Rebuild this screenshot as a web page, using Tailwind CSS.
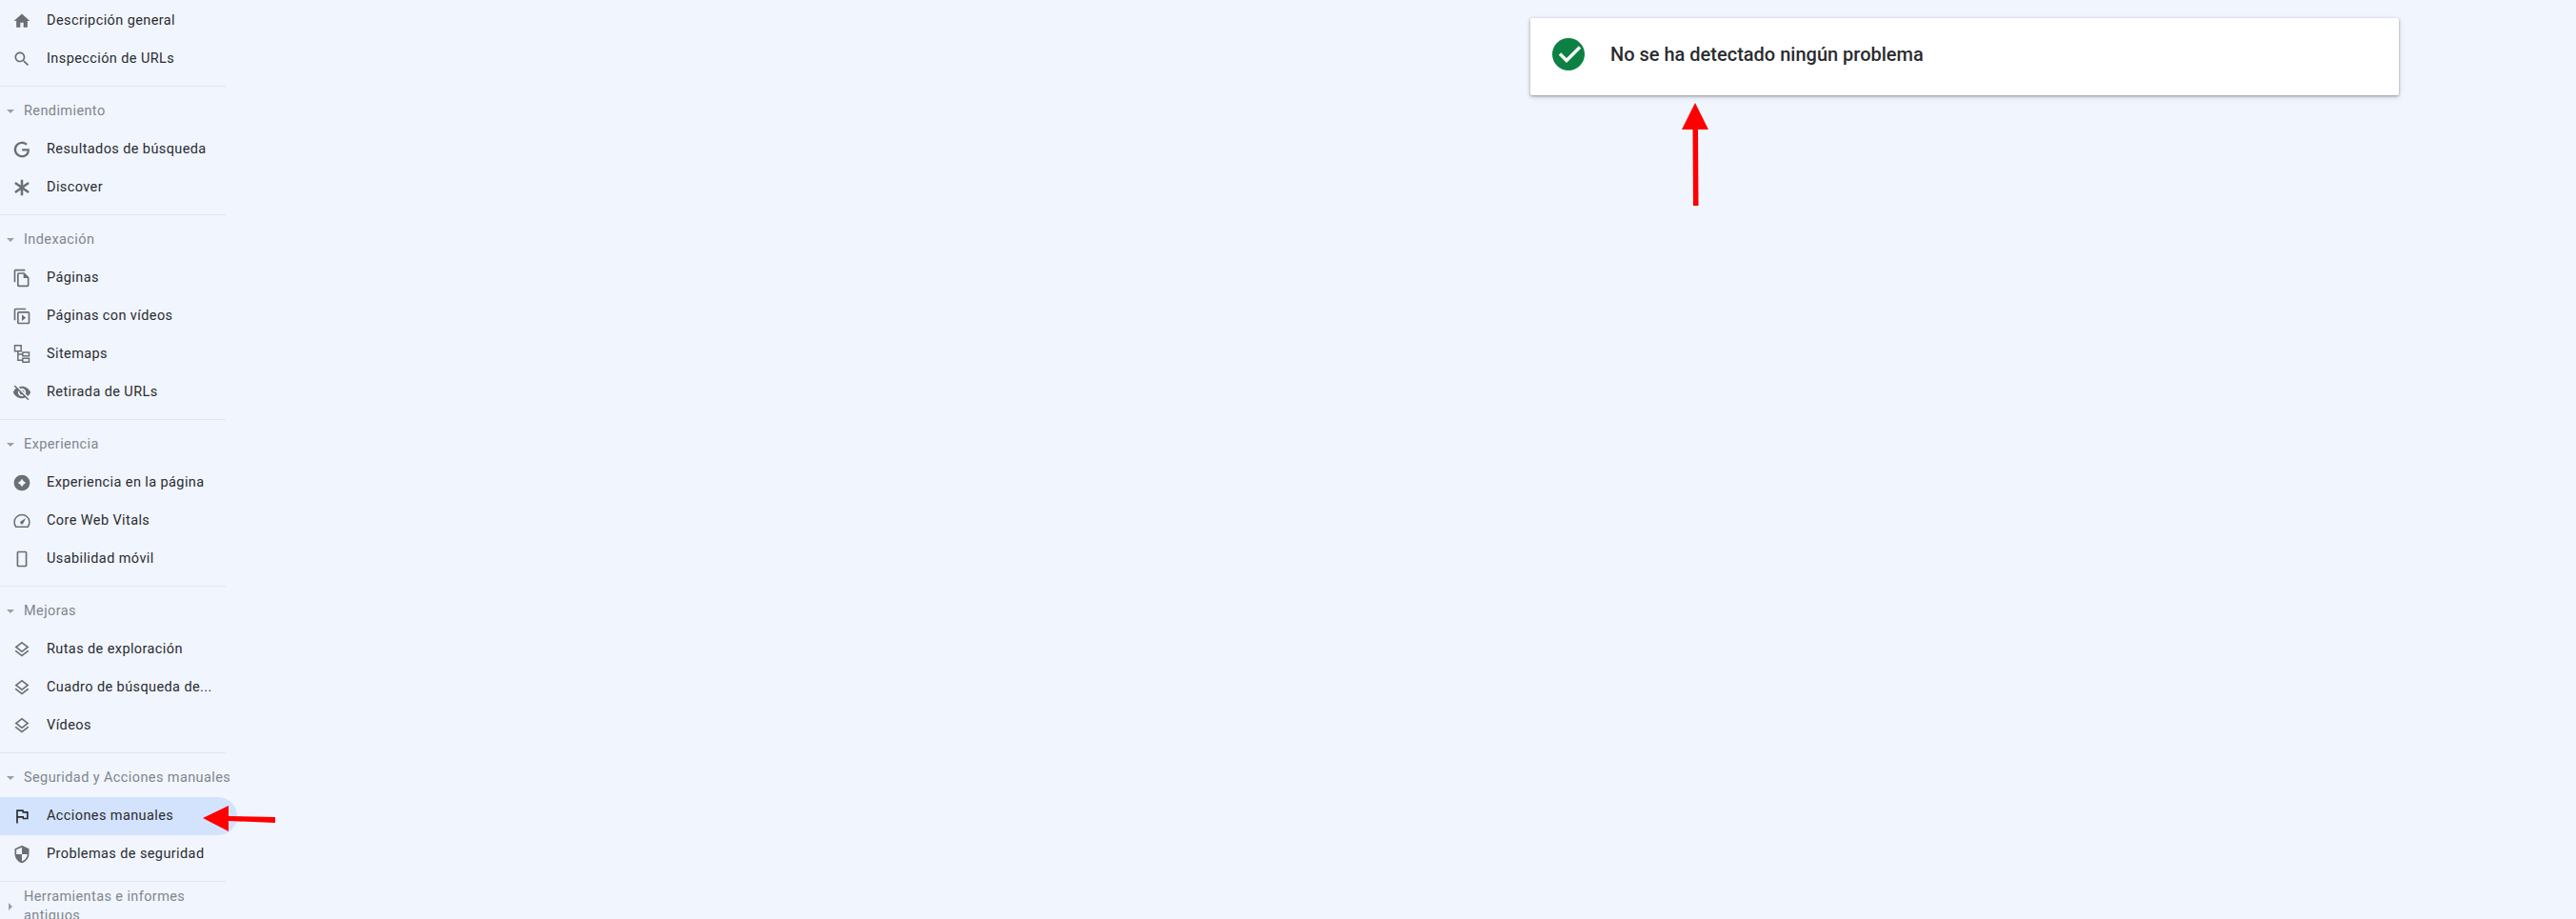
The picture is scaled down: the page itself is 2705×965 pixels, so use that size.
<!DOCTYPE html>
<html lang="es">
<head>
<meta charset="UTF-8">
<title>Acciones manuales</title>
<script src="https://cdn.jsdelivr.net/npm/@tailwindcss/browser@4"></script>
</head>
<body class="bg-[#f1f5fd] h-[965px] overflow-hidden relative font-['Roboto',sans-serif]">
<div class="flex items-start">

  <!-- menu lateral -->
  <aside class="w-[237px] shrink-0 pt-[2px] text-[14.5px] tracking-[0.4px] text-[#2a2c30]">
    <div class="border-b border-[#e3e6ec] pb-[8px]">
      <a class="flex items-center h-[40px] pl-[13px]">
        <svg class="w-[20px] h-[20px] fill-[#6b6f73] mr-[16px]" viewBox="0 0 24 24"><path d="M10 20v-6h4v6h5v-8h3L12 3 2 12h3v8z"/></svg>
        <span>Descripción general</span>
      </a>
      <a class="flex items-center h-[40px] pl-[13px]">
        <svg class="w-[20px] h-[20px] fill-[#6b6f73] mr-[16px]" viewBox="0 0 24 24"><path d="M15.5 14h-.79l-.28-.27C15.41 12.59 16 11.11 16 9.5 16 5.91 13.09 3 9.5 3S3 5.91 3 9.5 5.91 16 9.5 16c1.61 0 3.09-.59 4.23-1.57l.27.28v.79l5 4.99L20.49 19l-4.99-5zm-6 0C7.01 14 5 11.99 5 9.5S7.01 5 9.5 5 14 7.01 14 9.5 11.99 14 9.5 14z"/></svg>
        <span>Inspección de URLs</span>
      </a>
    </div>

    <div class="border-b border-[#e3e6ec] pb-[8px] pt-[6px]">
      <div class="flex items-center h-[40px] text-[#80868b]">
        <svg class="w-[24px] h-[24px] fill-[#9aa0a6] -ml-[1px] mr-[2px]" viewBox="0 0 24 24"><path d="M8 10l4 4 4-4z"/></svg>
        <span>Rendimiento</span>
      </div>
      <a class="flex items-center h-[40px] pl-[13px]">
        <svg class="w-[20px] h-[20px] fill-[#6b6f73] mr-[16px]" viewBox="0 0 24 24"><path d="M21.35 11.1h-9.17v2.73h6.51c-.33 3.81-3.5 5.44-6.5 5.44C8.36 19.27 5 16.25 5 12c0-4.1 3.2-7.27 7.2-7.27 3.09 0 4.9 1.97 4.9 1.97L19 4.72S16.56 2 12.1 2C6.42 2 2.03 6.8 2.03 12c0 5.05 4.13 10 10.22 10 5.35 0 9.25-3.67 9.25-9.09 0-1.15-.15-1.81-.15-1.81z"/></svg>
        <span>Resultados de búsqueda</span>
      </a>
      <a class="flex items-center h-[40px] pl-[13px]">
        <svg class="w-[20px] h-[20px] fill-none stroke-[#6b6f73] stroke-[3] mr-[16px]" viewBox="0 0 24 24"><path d="M12 2v20M3.500 6l17 12M20.500 6l-17 12"/></svg>
        <span>Discover</span>
      </a>
    </div>

    <div class="border-b border-[#e3e6ec] pb-[8px] pt-[6px]">
      <div class="flex items-center h-[40px] text-[#80868b]">
        <svg class="w-[24px] h-[24px] fill-[#9aa0a6] -ml-[1px] mr-[2px]" viewBox="0 0 24 24"><path d="M8 10l4 4 4-4z"/></svg>
        <span>Indexación</span>
      </div>
      <a class="flex items-center h-[40px] pl-[13px]">
        <svg class="w-[20px] h-[20px] fill-[#6b6f73] mr-[16px]" viewBox="0 0 24 24"><path d="M16 1H4c-1.1 0-2 .9-2 2v14h2V3h12V1zm-1 4H8c-1.1 0-1.99.9-1.99 2L6 21c0 1.1.89 2 1.99 2H19c1.1 0 2-.9 2-2V11l-6-6zM8 21V7h6v5h5v9H8z"/></svg>
        <span>Páginas</span>
      </a>
      <a class="flex items-center h-[40px] pl-[13px]">
        <svg class="w-[20px] h-[20px] mr-[16px]" viewBox="0 0 24 24"><path class="fill-none stroke-[#6b6f73] stroke-[2]" d="M3 17V4a1 1 0 0 1 1-1h13"/><rect class="fill-none stroke-[#6b6f73] stroke-[2]" x="7" y="7" width="14" height="14" rx="1"/><path class="fill-[#6b6f73]" d="M12 10v8l5-4z"/></svg>
        <span>Páginas con vídeos</span>
      </a>
      <a class="flex items-center h-[40px] pl-[13px]">
        <svg class="w-[20px] h-[20px] fill-none stroke-[#6b6f73] stroke-[1.8] mr-[16px]" viewBox="0 0 24 24"><path d="M3 1h8v7H3zM13 9.500h8V14h-8zM13 17h8v5h-8zM7 8v11.500h6M7 12h6"/></svg>
        <span>Sitemaps</span>
      </a>
      <a class="flex items-center h-[40px] pl-[13px]">
        <svg class="w-[20px] h-[20px] fill-[#6b6f73] mr-[16px]" viewBox="0 0 24 24"><path d="M12 7c2.76 0 5 2.24 5 5 0 .65-.13 1.26-.36 1.83l2.92 2.92c1.51-1.26 2.7-2.89 3.43-4.75-1.73-4.39-6-7.5-11-7.5-1.4 0-2.74.25-3.98.7l2.16 2.16C10.74 7.13 11.35 7 12 7zM2 4.270l2.28 2.28.46.46C3.08 8.3 1.78 10.020 1 12c1.73 4.39 6 7.5 11 7.5 1.55 0 3.03-.3 4.38-.84l.42.42L19.73 22 21 20.73 3.27 3 2 4.270zM7.530 9.8l1.55 1.55c-.05.21-.08.43-.08.65 0 1.66 1.34 3 3 3 .22 0 .44-.03.65-.08l1.55 1.55c-.67.33-1.41.53-2.2.53-2.76 0-5-2.24-5-5 0-.79.2-1.53.53-2.2zm4.31-.78l3.15 3.15.02-.16c0-1.66-1.34-3-3-3l-.17.01z"/></svg>
        <span>Retirada de URLs</span>
      </a>
    </div>

    <div class="border-b border-[#e3e6ec] pb-[8px] pt-[6px]">
      <div class="flex items-center h-[40px] text-[#80868b]">
        <svg class="w-[24px] h-[24px] fill-[#9aa0a6] -ml-[1px] mr-[2px]" viewBox="0 0 24 24"><path d="M8 10l4 4 4-4z"/></svg>
        <span>Experiencia</span>
      </div>
      <a class="flex items-center h-[40px] pl-[13px]">
        <svg class="w-[20px] h-[20px] fill-[#6b6f73] mr-[16px]" viewBox="0 0 24 24"><path fill-rule="evenodd" d="M12 2a10 10 0 1 0 0 20 10 10 0 0 0 0-20zm0 5l2 3 3 2-3 2-2 3-2-3-3-2 3-2z"/></svg>
        <span>Experiencia en la página</span>
      </a>
      <a class="flex items-center h-[40px] pl-[13px]">
        <svg class="w-[20px] h-[20px] mr-[16px]" viewBox="0 0 24 24"><path class="fill-none stroke-[#6b6f73] stroke-[1.8]" d="M4.500 19.500a9.500 9.500 0 1 1 15 0z"/><path class="fill-[#6b6f73]" d="M17 8.500l-3.500 6.700a2 2 0 1 1-3-2.600z"/></svg>
        <span>Core Web Vitals</span>
      </a>
      <a class="flex items-center h-[40px] pl-[13px]">
        <svg class="w-[20px] h-[20px] fill-none stroke-[#6b6f73] stroke-[2] mr-[16px]" viewBox="0 0 24 24"><rect x="6.500" y="3" width="11" height="18" rx="1"/></svg>
        <span>Usabilidad móvil</span>
      </a>
    </div>

    <div class="border-b border-[#e3e6ec] pb-[8px] pt-[6px]">
      <div class="flex items-center h-[40px] text-[#80868b]">
        <svg class="w-[24px] h-[24px] fill-[#9aa0a6] -ml-[1px] mr-[2px]" viewBox="0 0 24 24"><path d="M8 10l4 4 4-4z"/></svg>
        <span>Mejoras</span>
      </div>
      <a class="flex items-center h-[40px] pl-[13px]">
        <svg class="w-[20px] h-[20px] fill-[#6b6f73] mr-[16px]" viewBox="0 0 24 24"><path d="M11.990 18.540l-7.370-5.730L3 14.070l9 7 9-7-1.630-1.270zM12 16l7.360-5.730L21 9l-9-7-9 7 1.630 1.270L12 16zm0-11.470L17.740 9 12 13.470 6.260 9 12 4.530z"/></svg>
        <span>Rutas de exploración</span>
      </a>
      <a class="flex items-center h-[40px] pl-[13px]">
        <svg class="w-[20px] h-[20px] shrink-0 fill-[#6b6f73] mr-[16px]" viewBox="0 0 24 24"><path d="M11.990 18.540l-7.370-5.730L3 14.070l9 7 9-7-1.630-1.270zM12 16l7.360-5.730L21 9l-9-7-9 7 1.630 1.270L12 16zm0-11.470L17.740 9 12 13.470 6.260 9 12 4.530z"/></svg>
        <span class="whitespace-nowrap">Cuadro de búsqueda de...</span>
      </a>
      <a class="flex items-center h-[40px] pl-[13px]">
        <svg class="w-[20px] h-[20px] fill-[#6b6f73] mr-[16px]" viewBox="0 0 24 24"><path d="M11.990 18.540l-7.370-5.730L3 14.070l9 7 9-7-1.630-1.270zM12 16l7.360-5.730L21 9l-9-7-9 7 1.630 1.270L12 16zm0-11.470L17.740 9 12 13.470 6.260 9 12 4.530z"/></svg>
        <span>Vídeos</span>
      </a>
    </div>

    <div class="border-b border-[#e3e6ec] pb-[8px] pt-[6px]">
      <div class="flex items-center h-[40px] text-[#80868b]">
        <svg class="w-[24px] h-[24px] shrink-0 fill-[#9aa0a6] -ml-[1px] mr-[2px]" viewBox="0 0 24 24"><path d="M8 10l4 4 4-4z"/></svg>
        <span class="whitespace-nowrap">Seguridad y Acciones manuales</span>
      </div>
      <a class="flex items-center h-[40px] pl-[13px] w-[249px] bg-[#d3e3fd] rounded-r-[20px]">
        <svg class="w-[20px] h-[20px] fill-[#2a2c30] mr-[16px]" viewBox="0 0 24 24"><path d="M12.360 6l.4 2H18v6h-3.360l-.4-2H7V6h5.360M14 4H5v17h2v-7h5.600l.4 2h7V6h-5.600L14 4z"/></svg>
        <span>Acciones manuales</span>
      </a>
      <a class="flex items-center h-[40px] pl-[13px]">
        <svg class="w-[20px] h-[20px] fill-[#6b6f73] mr-[16px]" viewBox="0 0 24 24"><path d="M12 1L3 5v6c0 5.550 3.840 10.740 9 12 5.160-1.260 9-6.450 9-12V5l-9-4zm0 10.990h7c-.53 4.120-3.280 7.790-7 8.940V12H5V6.300l7-3.110v8.800z"/></svg>
        <span>Problemas de seguridad</span>
      </a>
    </div>

    <div class="flex items-center pt-[6px] text-[#80868b] leading-[20px]">
      <svg class="w-[24px] h-[24px] shrink-0 fill-[#9aa0a6] -ml-[1px] mr-[2px]" viewBox="0 0 24 24"><path d="M10 8l4 4-4 4z"/></svg>
      <span>Herramientas e informes antiguos</span>
    </div>
  </aside>

  <!-- contenido -->
  <main class="pl-[1370px] pt-[19px]">
    <div class="w-[912px] h-[81px] bg-white rounded-[2px] shadow-[0_1px_3px_rgba(60,64,67,0.5),0_2px_6px_rgba(60,64,67,0.12)] flex items-start pl-[23px] pt-[21px]">
      <svg class="w-[34px] h-[34px] shrink-0" viewBox="0 0 34 34"><circle cx="17" cy="17" r="17" fill="#0d8043"/><path d="M6.500 17.500l7 7 14-14" transform="translate(1.500 -1)" fill="none" stroke="#fff" stroke-width="3.400"/></svg>
      <span class="ml-[27px] text-[20px] leading-[34px] font-medium text-[#2a2c30]">No se ha detectado ningún problema</span>
    </div>
  </main>
</div>

<!-- flechas rojas -->
<svg class="absolute left-[210px] top-[843px] w-[82px] h-[34px]" viewBox="0 0 82 34"><path d="M3 16L30 3v11l49 1v6l-49-2v11z" fill="#fe0000"/></svg>
<svg class="absolute left-[1766px] top-[107px] w-[30px] h-[110px]" viewBox="0 0 30 110"><path d="M14 1L0 29h11.500l.5 80h5.500L17 29h11z" fill="#fe0000"/></svg>
</body>
</html>
